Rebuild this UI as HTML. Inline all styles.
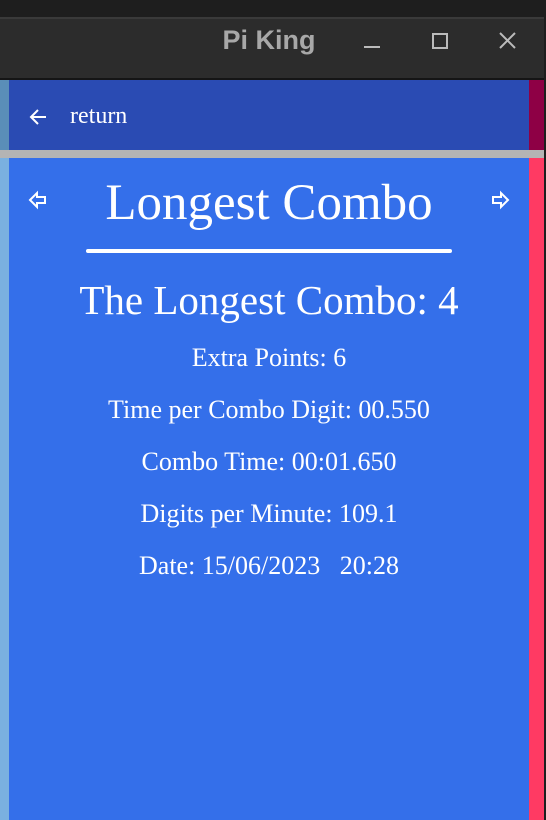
<!DOCTYPE html>
<html><head><meta charset="utf-8"><style>
body{margin:0;width:546px;height:820px;background:#1e1e1e;position:relative;overflow:hidden;font-family:"Liberation Serif",serif;color:#fff}
div{position:absolute}
.c{left:9px;width:520px;text-align:center;white-space:nowrap;line-height:1}
</style></head><body>
<div style="left:0;top:17px;width:544px;height:2px;background:#3a3a3a"></div>
<div style="left:0;top:19px;width:544px;height:59px;background:#2c2c2c"></div>
<div style="left:0;top:25px;width:544px;text-align:center;font-family:'Liberation Sans',sans-serif;font-weight:bold;font-size:27px;color:#a8a8a8"><span style="position:relative;left:-3px">Pi King</span></div>
<div style="left:364px;top:46px;width:16px;height:2px;background:#bbb"></div>
<div style="left:432px;top:33px;width:12px;height:12px;border:2px solid #bbb"></div>
<svg style="position:absolute;left:498px;top:31px" width="20" height="20"><path d="M2 2L17 17M17 2L2 17" stroke="#bbb" stroke-width="2"/></svg>
<div style="left:0;top:78px;width:544px;height:2px;background:#151515"></div>
<div style="left:0;top:80px;width:9px;height:70px;background:#5a8eb8"></div>
<div style="left:9px;top:80px;width:520px;height:70px;background:#2a4bb3"></div>
<div style="left:529px;top:80px;width:15px;height:70px;background:#8e0045"></div>
<svg style="position:absolute;left:29px;top:108px" width="20" height="18"><path d="M2 9H17M9 2L2 9L9 16" stroke="#fff" stroke-width="2" fill="none"/></svg>
<div style="left:70px;top:103px;font-size:24px">return</div>
<div style="left:0;top:150px;width:544px;height:8px;background:#b4b4b4"></div>
<div style="left:0;top:158px;width:9px;height:662px;background:#7ab0e0"></div>
<div style="left:9px;top:158px;width:520px;height:662px;background:#346fea"></div>
<div style="left:529px;top:158px;width:15px;height:662px;background:#ff3a63"></div>
<svg style="position:absolute;left:28px;top:190px" width="20" height="20"><path d="M2 10L9 3V7H17V13H9V17Z" stroke="#fff" stroke-width="2" fill="none"/></svg>
<div style="left:490px;top:190px"><svg width="20" height="20"><path d="M18 10L11 3V7H3V13H11V17Z" stroke="#fff" stroke-width="2" fill="none"/></svg></div>
<div class="c" style="top:178px;font-size:51px">Longest Combo</div>
<div style="left:86px;top:249px;width:366px;height:4px;border-radius:2px;background:#fff"></div>
<div class="c" style="top:280px;font-size:41px">The Longest Combo: 4</div>
<div class="c" style="top:345px;font-size:26px">Extra Points: 6</div>
<div class="c" style="top:397px;font-size:26px">Time per Combo Digit: 00.550</div>
<div class="c" style="top:449px;font-size:26px">Combo Time: 00:01.650</div>
<div class="c" style="top:501px;font-size:26px">Digits per Minute: 109.1</div>
<div class="c" style="top:553px;font-size:26px">Date: 15/06/2023&nbsp;&nbsp;&nbsp;20:28</div>
</body></html>
